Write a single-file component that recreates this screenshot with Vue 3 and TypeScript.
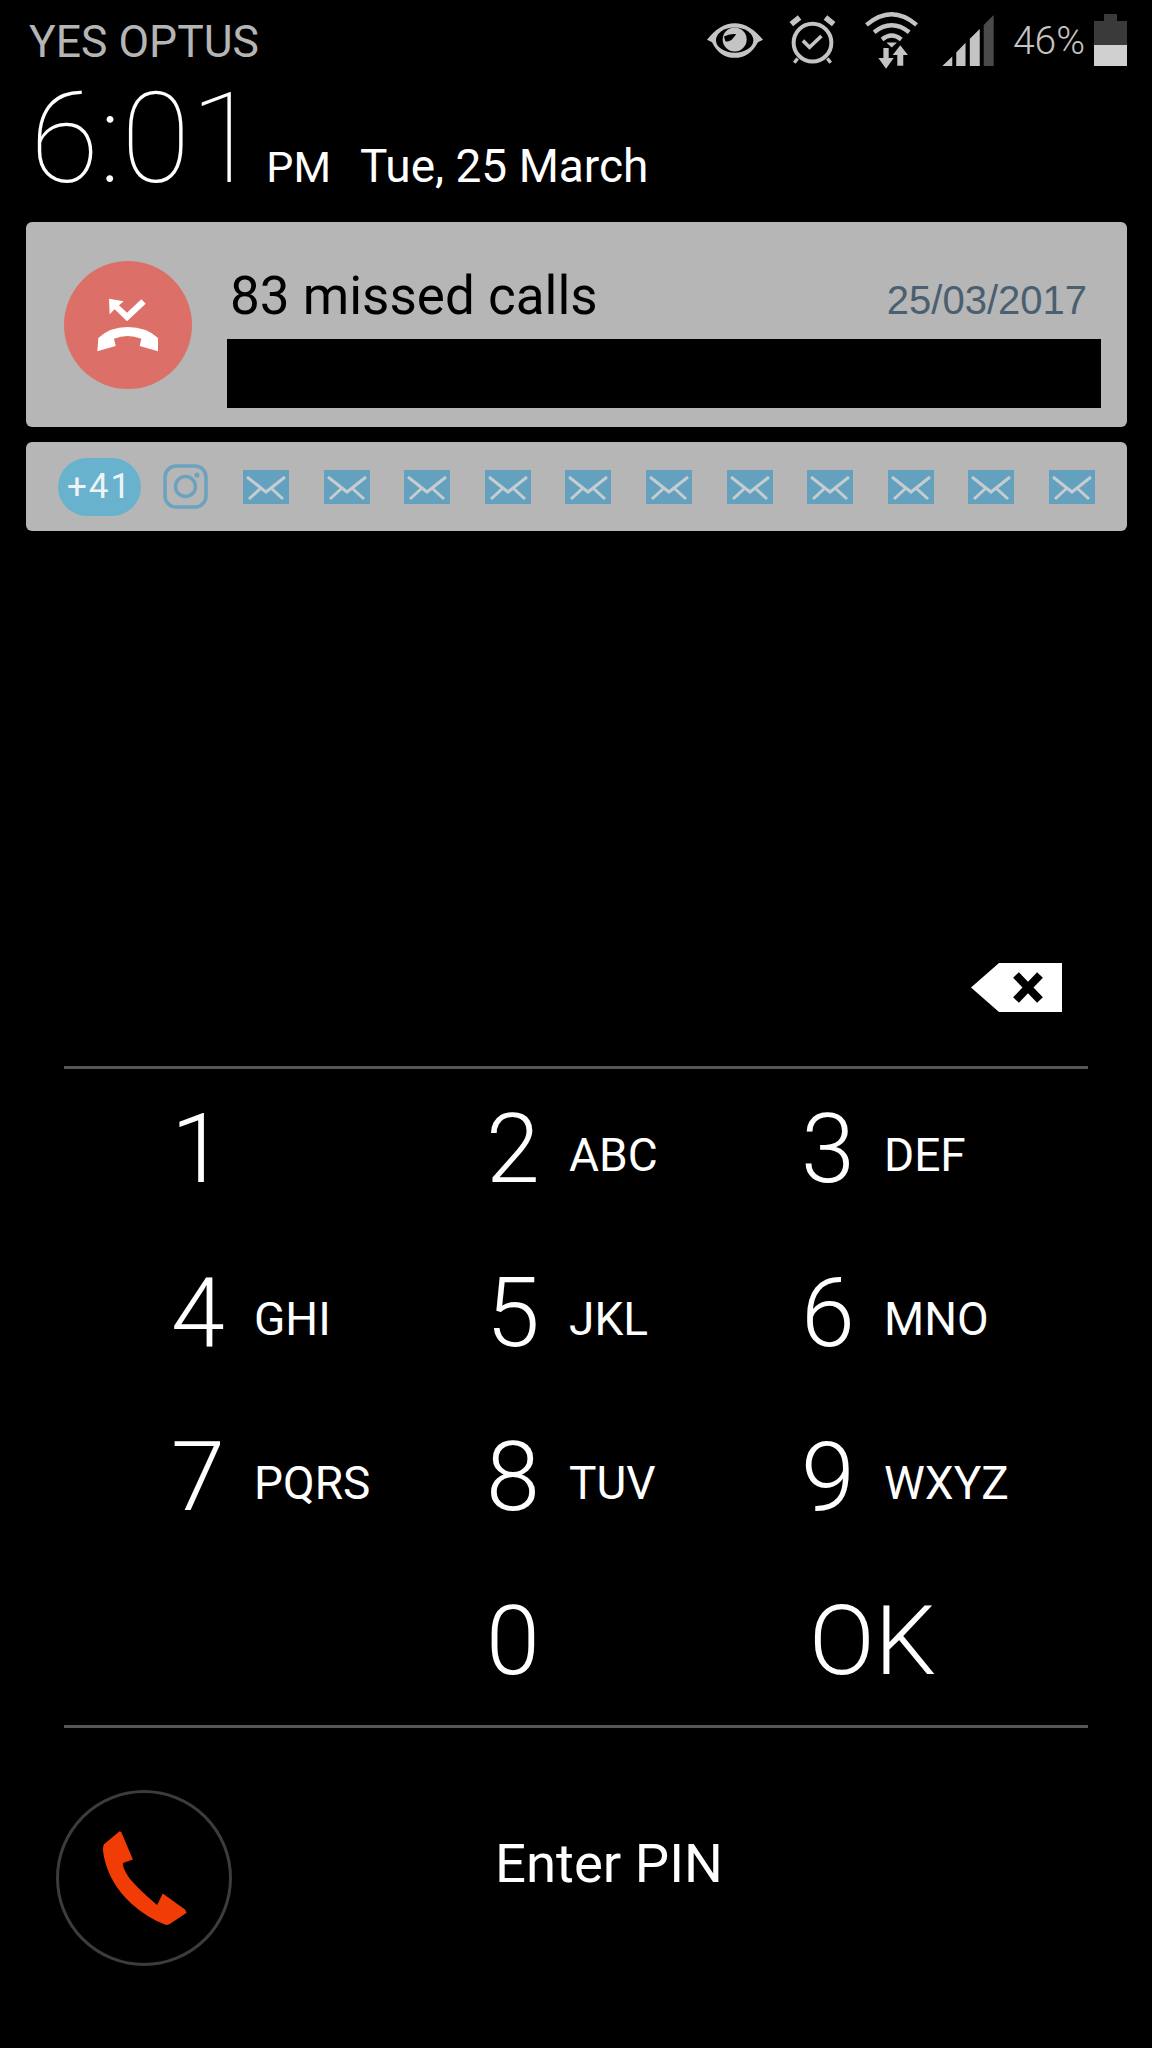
<template>
  <div class="screen">
    <!-- Status bar -->
    <div class="status">
      <span class="carrier">YES OPTUS</span>
      <div class="status__icons">
        <svg class="ic-eye" viewBox="82 68 168 104">
          <path d="M82 118Q120 68 165 68Q210 68 250 118L235 125Q210 172 165 172Q120 172 97 125Z" fill="#c4c4c4" />
          <ellipse cx="165" cy="119" rx="56" ry="38" fill="#000" />
          <circle cx="165" cy="117" r="36" fill="#c4c4c4" />
          <path d="M133 108Q150 98 170 101L156 118Q146 126 137 122Z" fill="#000" />
        </svg>
        <svg class="ic-alarm" viewBox="326 45 142 150">
          <circle cx="397" cy="128" r="57" fill="none" stroke="#c4c4c4" stroke-width="12" />
          <path d="M333 72L358 52M461 72L436 52" stroke="#c4c4c4" stroke-width="17" />
          <path d="M352 176L342 189M442 176L452 189" stroke="#c4c4c4" stroke-width="10" />
          <path d="M368 122L388 142L424 108" fill="none" stroke="#c4c4c4" stroke-width="11" />
        </svg>
        <svg class="ic-wifi" viewBox="557 33 159 172">
          <g fill="none" stroke="#c4c4c4" stroke-width="13">
            <path d="M561 72Q637 8 712 72" />
            <path d="M584 94Q637 52 690 94" />
            <path d="M608 116Q637 92 666 116" />
          </g>
          <path d="M621 125H653L637 140Z" fill="#c4c4c4" />
          <path d="M612 142H628V172H643L620 204L597 172H612Z" fill="#c4c4c4" />
          <path d="M654 195V163H640L663 133L686 163H672V195Z" fill="#c4c4c4" />
        </svg>
        <svg class="ic-signal" viewBox="790 43 155 154">
          <path d="M790 197L820 168V197ZM832 197V156L860 127V197ZM873 197V115L903 85V197Z" fill="#c4c4c4" />
          <path d="M915 197V73L945 43V197Z" fill="#4a4a4a" />
        </svg>
        <span class="battery-text">46%</span>
        <div class="battery">
          <div class="battery__nub"></div>
          <div class="battery__empty"></div>
          <div class="battery__level"></div>
        </div>
      </div>
    </div>

    <!-- Clock -->
    <div class="clock">
      <span class="clock__time">6:01</span>
      <span class="clock__ampm">PM</span>
      <span class="clock__date">Tue, 25 March</span>
    </div>

    <!-- Notifications -->
    <div class="card card--call">
      <div class="call-badge">
        <svg viewBox="133 137 384 384">
          <path d="M233 408L236 368Q270 335 324 335Q380 335 415 368L415 408L360 392L365 370Q345 362 324 362Q303 362 283 370L288 392Z" fill="#fff" />
          <path d="M268 250L312 258L298 270L322 292L365 252L378 265L322 318L285 282L270 297Z" fill="#fff" />
        </svg>
      </div>
      <div class="call-body">
        <div class="call-head">
          <span class="call-title">83 missed calls</span>
          <span class="call-date">25/03/2017</span>
        </div>
        <div class="redacted"></div>
      </div>
    </div>

    <div class="card card--icons">
      <span class="pill">+41</span>
      <svg class="insta" viewBox="0 0 45 45">
        <rect x="2" y="2" width="41" height="41" rx="11" fill="none" stroke="#6ba3bf" stroke-width="3.5" />
        <circle cx="22.5" cy="22.5" r="10" fill="none" stroke="#6ba3bf" stroke-width="3.5" />
        <circle cx="34" cy="11" r="2.6" fill="#6ba3bf" />
      </svg>
      <div class="mails">
        <svg v-for="n in 11" :key="n" class="mail" viewBox="0 0 46 34">
          <rect width="46" height="34" fill="#64a1bf" />
          <path d="M4 7L23 22L42 7M6 29L18 18M40 29L28 18" fill="none" stroke="#c6cdd0" stroke-width="3" />
        </svg>
      </div>
    </div>

    <!-- PIN entry -->
    <div class="entry">
      <svg class="backspace" viewBox="0 0 91 49">
        <path d="M0 24.5L28 0H91V49H28Z" fill="#fff" />
        <path d="M45 12L69 37M69 12L45 37" stroke="#000" stroke-width="8" />
      </svg>
    </div>

    <div class="keypad">
      <div v-for="key in keys" :key="key.digit + key.letters" class="key">
        <span class="key__digit" :class="{ 'key__digit--ok': key.digit === 'OK' }">{{ key.digit }}</span>
        <span class="key__letters">{{ key.letters }}</span>
      </div>
    </div>

    <div class="bottom">
      <div class="call-btn">
        <svg viewBox="200 170 280 310">
          <path d="M265 183L218 222Q212 232 218 260Q235 340 300 400Q350 445 405 465L415 463L467 428L462 418L395 370L378 405Q325 360 295 325Q272 290 275 278L305 268L270 185Z" fill="#f23c05" />
        </svg>
      </div>
      <span class="enter-pin">Enter PIN</span>
    </div>
  </div>
</template>

<script setup lang="ts">
interface Key {
  digit: string
  letters: string
}

const keys: Key[] = [
  { digit: '1', letters: '' },
  { digit: '2', letters: 'ABC' },
  { digit: '3', letters: 'DEF' },
  { digit: '4', letters: 'GHI' },
  { digit: '5', letters: 'JKL' },
  { digit: '6', letters: 'MNO' },
  { digit: '7', letters: 'PQRS' },
  { digit: '8', letters: 'TUV' },
  { digit: '9', letters: 'WXYZ' },
  { digit: '', letters: '' },
  { digit: '0', letters: '' },
  { digit: 'OK', letters: '' }
]
</script>

<style>
html,
body {
  margin: 0;
  background: #000;
}
</style>

<style scoped>
.screen {
  width: 1152px;
  height: 2048px;
  background: #000;
  color: #fff;
  font-family: Roboto, "Liberation Sans", sans-serif;
  overflow: hidden;
}

/* Status bar */
.status {
  height: 80px;
  display: flex;
  align-items: center;
  justify-content: space-between;
  padding: 0 25px 0 29px;
}

.carrier {
  font-size: 44.5px;
  color: #b5b5b5;
  padding-top: 4px;
}

.status__icons {
  display: flex;
  align-items: center;
}

.ic-eye { width: 56px; height: 35px; }
.ic-alarm { width: 47px; height: 50px; margin-left: 26px; }
.ic-wifi { width: 53px; height: 57px; margin-left: 29px; }
.ic-signal { width: 52px; height: 51px; margin-left: 24px; }

.battery-text {
  font-size: 39px;
  font-weight: 300;
  color: #c4c4c4;
  margin-left: 19px;
  margin-right: -1px;
  padding-top: 2px;
}

.battery {
  width: 33px;
  height: 52px;
  margin-left: 10px;
  display: flex;
  flex-direction: column;
  align-items: center;
}

.battery__nub { width: 13px; height: 7px; background: #3a3a3a; }
.battery__empty { width: 100%; height: 24px; background: #3a3a3a; }
.battery__level { width: 100%; height: 21px; background: #d0d0d0; }

/* Clock */
.clock {
  height: 142px;
  display: flex;
  align-items: baseline;
  padding-left: 30px;
}

.clock__time {
  font-size: 126px;
  font-weight: 100;
  line-height: 118px;
}

.clock__ampm {
  font-size: 43px;
  margin-left: 7px;
}

.clock__date {
  font-size: 46px;
  margin-left: 29px;
}

/* Cards */
.card {
  width: 1101px;
  margin-left: 26px;
  background: #b6b6b6;
  border-radius: 6px;
  display: flex;
  align-items: center;
}

.card--call {
  height: 205px;
  padding-left: 38px;
  box-sizing: border-box;
}

.call-badge {
  width: 128px;
  height: 128px;
  border-radius: 50%;
  background: #dc6f68;
  flex-shrink: 0;
}

.call-badge svg {
  display: block;
  width: 128px;
  height: 128px;
}

.call-body {
  width: 874px;
  margin-left: 35px;
  align-self: flex-start;
}

.call-head {
  height: 86px;
  padding: 31px 14px 0 3px;
  display: flex;
  align-items: center;
  justify-content: space-between;
}

.call-title {
  font-size: 53px;
  color: #000;
}

.call-date {
  font-family: "Liberation Sans", Arial, sans-serif;
  font-size: 40px;
  color: #4a5f70;
  padding-top: 8px;
}

.redacted {
  height: 69px;
  background: #000;
}

.card--icons {
  height: 89px;
  margin-top: 15px;
  padding: 0 32px;
  box-sizing: border-box;
}

.pill {
  width: 83px;
  height: 58px;
  border-radius: 29px;
  background: #69b2cd;
  color: #eef4f6;
  font-size: 35px;
  line-height: 58px;
  letter-spacing: 2px;
  text-align: center;
}

.insta {
  width: 45px;
  height: 45px;
  margin-left: 22px;
}

.mails {
  display: flex;
  flex: 1;
  justify-content: space-between;
  margin-left: 35px;
}

.mail {
  width: 46px;
  height: 34px;
}

/* PIN entry */
.entry {
  height: 538px;
  box-sizing: border-box;
  padding: 432px 90px 0 0;
  border-bottom: 3px solid #555;
  margin: 0 64px;
  display: flex;
  justify-content: flex-end;
  align-items: flex-start;
}

.backspace {
  width: 91px;
  height: 49px;
  margin-right: -64px;
}

.keypad {
  display: grid;
  grid-template-columns: repeat(3, 315px);
  grid-auto-rows: 164px;
  height: 658px;
  margin: -2px 64px 0;
  padding-left: 107px;
  border-bottom: 3px solid #555;
}

.key {
  display: flex;
  align-items: center;
}

.key__digit {
  width: 83px;
  font-size: 97px;
  font-weight: 300;
  line-height: 164px;
  flex-shrink: 0;
}

.key__digit--ok {
  margin-left: 8px;
  white-space: nowrap;
}

.key__letters {
  font-size: 46px;
  padding-top: 12px;
}

/* Bottom row */
.bottom {
  display: flex;
  align-items: center;
  padding: 62px 0 0 56px;
}

.call-btn {
  width: 176px;
  height: 176px;
  box-sizing: border-box;
  border: 3px solid #3c3c3c;
  border-radius: 50%;
  display: flex;
  align-items: center;
  justify-content: center;
}

.call-btn svg {
  width: 93px;
  height: 103px;
}

.enter-pin {
  font-size: 54.5px;
  margin-left: 263px;
  margin-bottom: 30px;
}
</style>
